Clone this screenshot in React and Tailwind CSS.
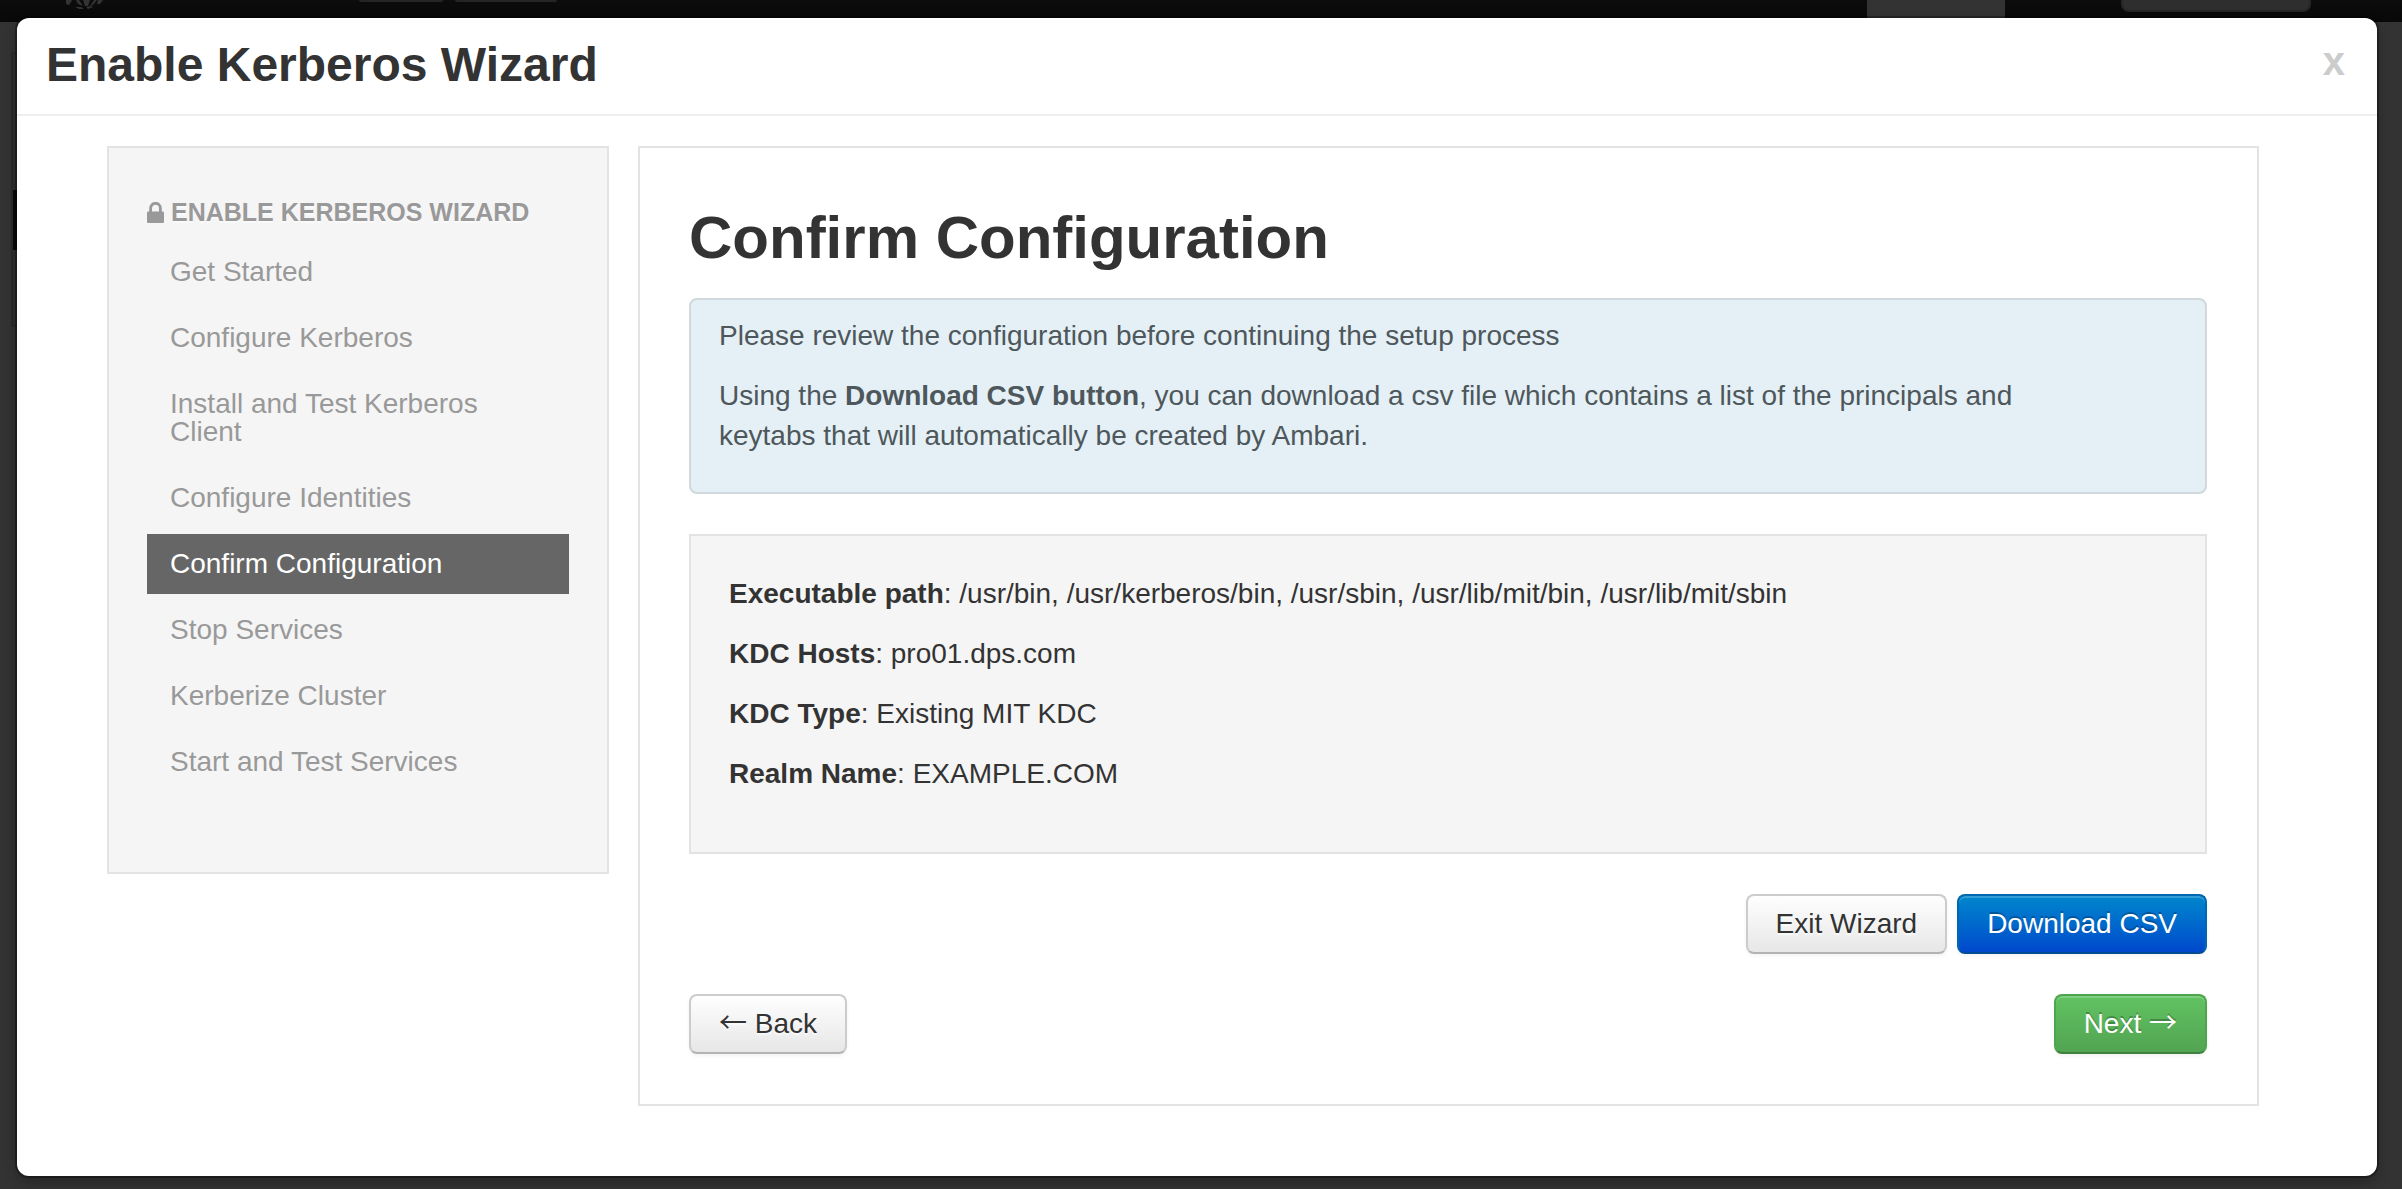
const STEPS = [
  'Get Started',
  'Configure Kerberos',
  'Install and Test Kerberos Client',
  'Configure Identities',
  'Confirm Configuration',
  'Stop Services',
  'Kerberize Cluster',
  'Start and Test Services',
];
const CURRENT = 4;

const DETAILS = [
  ['Executable path', '/usr/bin, /usr/kerberos/bin, /usr/sbin, /usr/lib/mit/bin, /usr/lib/mit/sbin'],
  ['KDC Hosts', 'pro01.dps.com'],
  ['KDC Type', 'Existing MIT KDC'],
  ['Realm Name', 'EXAMPLE.COM'],
];

const BTN =
  'rounded-lg border-2 px-7 py-2 text-[28px] leading-10 whitespace-nowrap cursor-pointer';
const BTN_DEFAULT =
  'border-[#cccccc] border-b-[#b3b3b3] bg-linear-to-b from-white to-[#e6e6e6] bg-origin-border text-[#333333] [text-shadow:0_2px_2px_rgba(255,255,255,0.75)] shadow-[inset_0_2px_0_rgba(255,255,255,0.2),0_2px_4px_rgba(0,0,0,0.05)]';
const BTN_PRIMARY =
  'border-[#0067b0] border-b-[#004a96] bg-linear-to-b from-[#0088cc] to-[#0044cc] bg-origin-border text-white [text-shadow:0_-2px_0_rgba(0,0,0,0.25)] shadow-[inset_0_2px_0_rgba(255,255,255,0.2),0_2px_4px_rgba(0,0,0,0.05)]';
const BTN_SUCCESS =
  'border-[#4da64d] border-b-[#408140] bg-linear-to-b from-[#62c462] to-[#51a351] bg-origin-border text-white [text-shadow:0_-2px_0_rgba(0,0,0,0.25)] shadow-[inset_0_2px_0_rgba(255,255,255,0.2),0_2px_4px_rgba(0,0,0,0.05)]';
const ARROW = "font-['Noto_Sans_CJK_SC',sans-serif] leading-none";

function LockIcon() {
  return (
    <svg className="w-[17px] h-[21px] shrink-0" viewBox="0 0 17 21" aria-hidden="true">
      <path d="M3.6 10V6.2a4.9 4.9 0 0 1 9.8 0V10" fill="none" stroke="#999999" strokeWidth="2.8" />
      <rect x="0" y="9.5" width="17" height="11.5" rx="1.2" fill="#999999" />
    </svg>
  );
}

function Backdrop() {
  return (
    <div className="absolute inset-0 overflow-hidden bg-[#333333]" aria-hidden="true">
      <div className="relative h-[22px] bg-linear-to-b from-[#0c0c0c] to-[#080808]">
        <svg className="absolute left-16 top-0 w-10 h-2.5" viewBox="0 0 40 10">
          <g fill="#333333">
            <path d="M2 0h6l-1 2-2 3-3-1z" />
            <path d="M12 0h3l4 6-5-2z" />
            <path d="M19 0h7l-2 6h-3z" />
            <path d="M30 0h3l-4 5-3 1z" />
            <path d="M34 0h5l-3 4h-3z" />
            <path d="M11 7l6 0 3 2-5 0z" />
            <path d="M22 7l5-1 2 1-5 2z" />
          </g>
        </svg>
        <div className="absolute left-[359px] top-0 w-[84px] h-0.5 rounded-b bg-[#252525]" />
        <div className="absolute left-[455px] top-0 w-[102px] h-0.5 rounded-b bg-[#252525]" />
        <div className="absolute right-[397px] top-0 w-[138px] h-[22px] bg-[#333333]" />
        <div className="absolute right-[91px] top-0 w-[190px] h-3 rounded-b-lg border-2 border-t-0 border-[#262626] bg-[#2e2e2e]" />
      </div>
      <div className="absolute left-[11px] top-[52px] w-10 h-[275px] border-2 border-[#2b2b2b] bg-[#303030]" />
      <div className="absolute left-[13px] top-[190px] w-10 h-[60px] bg-[#0a0a0a]" />
    </div>
  );
}

export default function App() {
  return (
    <div className="relative flex min-h-screen pt-[18px] pb-[13px] pl-[17px] pr-[25px] font-['Liberation_Sans',Arial,sans-serif] text-[28px] leading-10 text-[#333333]">
      <Backdrop />
      <div
        role="dialog"
        aria-labelledby="wizard-title"
        className="relative flex-1 rounded-xl bg-white shadow-[0_0_0_2px_rgba(0,0,0,0.3),0_6px_14px_rgba(0,0,0,0.3)]"
      >
        <header className="flex items-center justify-between h-[98px] pb-0.5 pl-[29px] pr-8 border-b-2 border-[#eeeeee]">
          <h2 id="wizard-title" className="text-[48px] leading-[60px] font-bold">
            Enable Kerberos Wizard
          </h2>
          <button
            type="button"
            aria-label="Close"
            className="pb-2 text-[40px] leading-10 font-bold text-[#cccccc] cursor-pointer"
          >
            x
          </button>
        </header>

        <div className="grid grid-cols-[502fr_1621fr] items-start gap-[29px] pt-[30px] pb-[70px] pl-[90px] pr-[118px]">
          <nav className="border-2 border-[#e3e3e3] bg-[#f5f5f5] px-[38px] pt-11 pb-20">
            <h3 className="flex items-center gap-[7px] mb-[10px] text-[25px] leading-10 font-bold uppercase text-[#999999] [text-shadow:0_2px_0_rgba(255,255,255,0.5)] whitespace-nowrap">
              <LockIcon />
              Enable Kerberos Wizard
            </h3>
            <ul className="flex flex-col gap-1.5">
              {STEPS.map((step, i) => (
                <li key={step}>
                  <a
                    href="#"
                    aria-current={i === CURRENT ? 'step' : undefined}
                    className={
                      i === CURRENT
                        ? 'block px-[23px] py-4 leading-7 bg-[#666666] text-white'
                        : 'block px-[23px] py-4 leading-7 text-[#999999]'
                    }
                  >
                    {step}
                  </a>
                </li>
              ))}
            </ul>
          </nav>

          <main className="border-2 border-[#e3e3e3] pl-[49px] pr-[50px] py-[50px]">
            <h1 className="mb-5 text-[60px] leading-20 font-bold">Confirm Configuration</h1>
            <div className="mb-10 rounded-lg border-2 border-[#d1d9dc] bg-[#e4f0f5] py-4 pl-7 pr-[100px] text-[#4e575b]">
              <p className="mb-5">Please review the configuration before continuing the setup process</p>
              <p className="mb-5">
                Using the <b>Download CSV button</b>, you can download a csv file which contains a list of
                the principals and keytabs that will automatically be created by Ambari.
              </p>
            </div>
            <div className="mb-10 border-2 border-[#e3e3e3] bg-[#f5f5f5] p-[38px]">
              {DETAILS.map(([label, value]) => (
                <p key={label} className="mb-5">
                  <b>{label}</b>: {value}
                </p>
              ))}
            </div>
            <div className="mb-10 flex justify-end gap-2.5">
              <button type="button" className={`${BTN} ${BTN_DEFAULT}`}>Exit Wizard</button>
              <button type="button" className={`${BTN} ${BTN_PRIMARY}`}>Download CSV</button>
            </div>
            <div className="flex justify-between">
              <button type="button" className={`${BTN} ${BTN_DEFAULT}`}>
                <span className={ARROW}>←</span> Back
              </button>
              <button type="button" className={`${BTN} ${BTN_SUCCESS}`}>
                Next <span className={ARROW}>→</span>
              </button>
            </div>
          </main>
        </div>
      </div>
    </div>
  );
}
